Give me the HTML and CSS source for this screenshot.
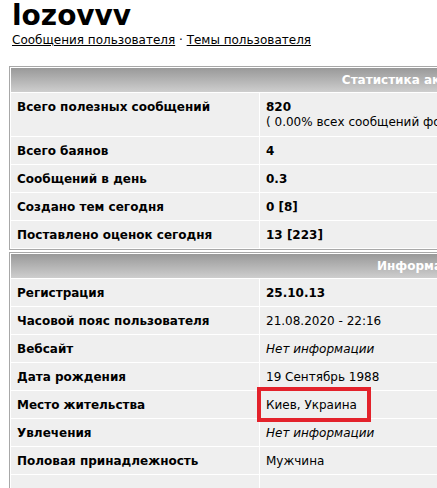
FILE: index.html
```html
<!DOCTYPE html>
<html lang="ru">
<head>
    <meta charset="UTF-8">
    <meta name="viewport" content="width=device-width, initial-scale=1.0">
    <title>lozovvv</title>
    <link rel="stylesheet" href="styles.css">
</head>
<body>

<div class="profile">
    <h1 class="username">lozovvv</h1>
    <div class="user-links">
        <a href="#">Сообщения пользователя</a> &middot; <a href="#">Темы пользователя</a>
    </div>

    <table class="stats">
        <tr><th colspan="2">Статистика активности</th></tr>
        <tr class="tall">
            <td class="label">Всего полезных сообщений</td>
            <td><b>820</b><br>( 0.00% всех сообщений форума )</td>
        </tr>
        <tr><td class="label">Всего баянов</td><td><b>4</b></td></tr>
        <tr><td class="label">Сообщений в день</td><td><b>0.3</b></td></tr>
        <tr><td class="label">Создано тем сегодня</td><td><b>0 [8]</b></td></tr>
        <tr><td class="label">Поставлено оценок сегодня</td><td><b>13 [223]</b></td></tr>
    </table>

    <table class="stats">
        <tr><th colspan="2">Информация</th></tr>
        <tr><td class="label">Регистрация</td><td><b>25.10.13</b></td></tr>
        <tr><td class="label">Часовой пояс пользователя</td><td>21.08.2020 - 22:16</td></tr>
        <tr><td class="label">Вебсайт</td><td><i>Нет информации</i></td></tr>
        <tr><td class="label">Дата рождения</td><td>19 Сентябрь 1988</td></tr>
        <tr><td class="label">Место жительства</td><td><span class="marked">Киев, Украина</span></td></tr>
        <tr><td class="label">Увлечения</td><td><i>Нет информации</i></td></tr>
        <tr><td class="label">Половая принадлежность</td><td>Мужчина</td></tr>
        <tr><td class="label">&nbsp;</td><td>&nbsp;</td></tr>
    </table>
</div>

</body>
</html>
```

FILE: styles.css
```css
html, body {
    overflow: hidden;
}
body {
    margin: 0;
    background: #fff;
    color: #000;
    font-family: "DejaVu Sans", Verdana, sans-serif;
    font-size: 12px;
}
.profile {
    padding: 0 9px;
}
.username {
    margin: 0;
    padding: 0 0 0 3px;
    font-size: 28px;
    line-height: 32px;
    font-weight: bold;
}
.user-links {
    padding-left: 3px;
    line-height: 16px;
    margin-bottom: 18px;
}
.user-links a {
    color: #000;
    text-decoration: underline;
}
.stats {
    width: 826px;
    border: 1px solid #a8a8a8;
    border-spacing: 1px;
    background: #fff;
    margin-bottom: 2px;
}
.stats th {
    height: 24px;
    padding: 0;
    background: linear-gradient(#999, #cecece);
    color: #fff;
    font-weight: bold;
    text-align: center;
}
.stats td {
    background: #efefef;
    padding: 7px 6px 6px;
    line-height: 14px;
    vertical-align: top;
}
.stats .tall td {
    line-height: 15px;
}
.stats td.label {
    width: 236px;
    font-weight: bold;
}
.marked {
    position: relative;
}
.marked::after {
    content: "";
    position: absolute;
    left: -9px;
    top: -11px;
    right: -14px;
    bottom: -10px;
    border: 4px solid #e3222b;
}
```
